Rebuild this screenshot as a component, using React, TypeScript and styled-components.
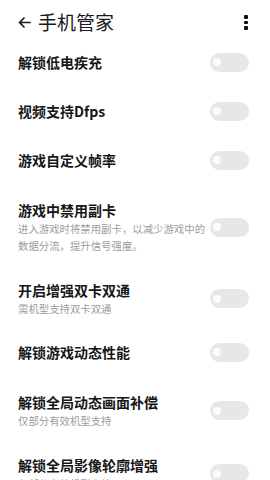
import React from "react";
import styled, { createGlobalStyle } from "styled-components";

const Global = createGlobalStyle`
  html, body { margin: 0; padding: 0; background: #ffffff; }
  body { font-family: "Noto Sans CJK SC", "Noto Sans", sans-serif; overflow: hidden; }
`;

const Page = styled.div`
  width: 270px;
  height: 480px;
  overflow: hidden;
  background: #ffffff;
  display: flex;
  flex-direction: column;
`;

const Header = styled.div`
  height: 37.5px;
  flex: none;
  display: flex;
  align-items: center;
  padding: 7px 22px 0 16px;
  box-sizing: border-box;
`;

const BackButton = styled.div`
  width: 16px;
  height: 20px;
  display: flex;
  align-items: center;
  justify-content: center;
  margin-right: 6px;
`;

const Title = styled.div`
  font-size: 19px;
  line-height: 24px;
  color: #1a1a1a;
  font-weight: 400;
  flex: 1;
`;

const MenuButton = styled.div`
  width: 4px;
  display: flex;
  flex-direction: column;
  align-items: center;
  gap: 2px;
`;

const Dot = styled.span`
  width: 3.5px;
  height: 3.5px;
  background: #111;
  border-radius: 1px;
`;

const List = styled.div`
  display: flex;
  flex-direction: column;
`;

const Row = styled.div<{ $hasSub: boolean }>`
  display: flex;
  align-items: center;
  padding: ${(p) => (p.$hasSub ? "15.5px 21px 10.5px 18px" : "14.5px 21px 14.5px 18px")};
  gap: 4px;
`;

const Texts = styled.div`
  flex: 1;
  display: flex;
  flex-direction: column;
  min-width: 0;
`;

const RowTitle = styled.div`
  font-size: 14px;
  line-height: 20px;
  font-weight: 700;
  color: #161616;
`;

const RowSub = styled.div`
  font-size: 10.4px;
  line-height: 17px;
  color: #9c9c9c;
`;

const Toggle = styled.div`
  flex: none;
  width: 39px;
  height: 19px;
  border-radius: 10px;
  background: #e7e7e7;
  display: flex;
  align-items: center;
  padding-left: 3px;
  box-sizing: border-box;
`;

const Knob = styled.span`
  width: 8px;
  height: 8px;
  border-radius: 50%;
  background: #fbfbfb;
`;

type Item = { title: string; sub?: string };

const items: Item[] = [
  { title: "解锁低电疾充" },
  { title: "视频支持Dfps" },
  { title: "游戏自定义帧率" },
  { title: "游戏中禁用副卡", sub: "进入游戏时将禁用副卡，以减少游戏中的数据分流，提升信号强度。" },
  { title: "开启增强双卡双通", sub: "需机型支持双卡双通" },
  { title: "解锁游戏动态性能" },
  { title: "解锁全局动态画面补偿", sub: "仅部分有效机型支持" },
  { title: "解锁全局影像轮廓增强", sub: "仅部分有效机型支持" },
];

export default function App() {
  return (
    <Page>
      <Global />
      <Header>
        <BackButton>
          <svg width="13" height="13" viewBox="0 0 13 13" fill="none" stroke="#1a1a1a" strokeWidth="1.7" strokeLinecap="round" strokeLinejoin="round">
            <path d="M12 6.5H1.5M6 2L1.5 6.5 6 11" />
          </svg>
        </BackButton>
        <Title>手机管家</Title>
        <MenuButton>
          <Dot />
          <Dot />
          <Dot />
        </MenuButton>
      </Header>
      <List>
        {items.map((it) => (
          <Row key={it.title} $hasSub={!!it.sub}>
            <Texts>
              <RowTitle>{it.title}</RowTitle>
              {it.sub && <RowSub>{it.sub}</RowSub>}
            </Texts>
            <Toggle>
              <Knob />
            </Toggle>
          </Row>
        ))}
      </List>
    </Page>
  );
}
